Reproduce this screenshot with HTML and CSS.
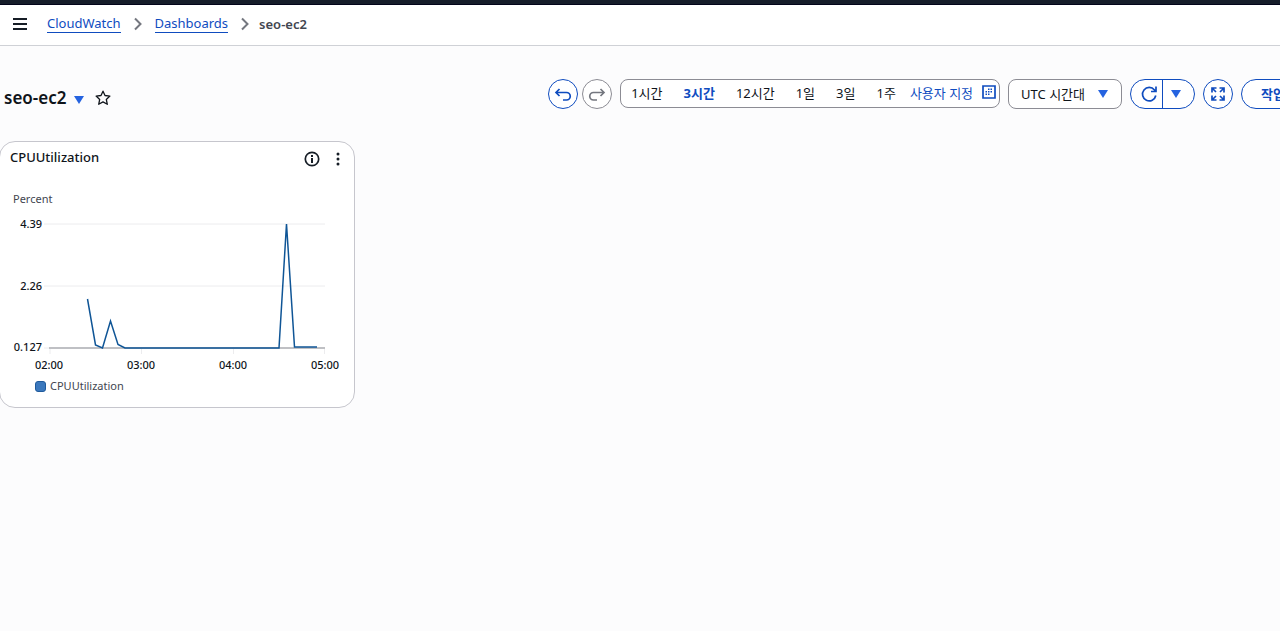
FILE: index.html
```html
<!DOCTYPE html>
<html lang="ko">
<head>
  <meta charset="UTF-8" />
  <meta name="viewport" content="width=device-width, initial-scale=1.0"/>
  <title>seo-ec2 | CloudWatch</title>
  <link rel="stylesheet" href="styles.css">
</head>
<body>

<div class="topbar"></div>

<!-- Breadcrumbs -->
<nav class="breadcrumbs" aria-label="Breadcrumbs">
  <button class="icon-btn menu" aria-label="Menu">
    <svg width="14" height="12" viewBox="0 0 14 12" stroke="#161d26" stroke-width="2"><path d="M0 1h14M0 6h14M0 11h14"/></svg>
  </button>
  <a href="#">CloudWatch</a>
  <svg class="sep" width="8" height="14" viewBox="0 0 8 14"><path d="M1 1.500l5.500 5.500L1 12.500"/></svg>
  <a href="#">Dashboards</a>
  <svg class="sep" width="8" height="14" viewBox="0 0 8 14"><path d="M1 1.500l5.500 5.500L1 12.500"/></svg>
  <span class="current">seo-ec2</span>
</nav>

<!-- Dashboard header -->
<header class="toolbar">
  <div class="title">
    <h1>seo-ec2</h1>
    <button class="icon-btn dashboards" aria-label="Dashboards">
      <svg class="caret" width="10" height="8" viewBox="0 0 10 8"><path d="M0 0h10L5 8z"/></svg>
    </button>
    <button class="icon-btn star" aria-label="Favorite">
      <svg width="16" height="16" viewBox="0 0 16 16" fill="none" stroke="#0f141a" stroke-width="1.3" stroke-linejoin="round"><path d="M8 1.200l2 4.300 4.900.6-3.600 3.300 1 4.900L8 11.900l-4.300 2.400 1-4.900L1.100 6.100 6 5.500z"/></svg>
    </button>
  </div>

  <div class="actions">
    <button class="round" aria-label="Undo">
      <svg width="18" height="18" viewBox="0 0 18 18"><path d="M5.500 4L2 7.500 5.500 11M2 7.500h10.500a3.700 3.700 0 0 1 0 7.500H9"/></svg>
    </button>
    <button class="round disabled" aria-label="Redo">
      <svg width="18" height="18" viewBox="0 0 18 18"><path d="M12.500 4L16 7.500 12.500 11M16 7.500H5.500a3.700 3.700 0 0 0 0 7.500H9"/></svg>
    </button>

    <div class="range">
      <button>1시간</button>
      <button class="selected">3시간</button>
      <button>12시간</button>
      <button>1일</button>
      <button>3일</button>
      <button>1주</button>
      <button class="custom">사용자 지정
        <svg width="14" height="14" viewBox="0 0 14 14"><path fill="none" stroke="#0f4cbf" stroke-width="1.700" d="M1 1h12v12H1z"/><path fill="#0f4cbf" d="M6 3.500h1.500V5H6zM8.500 3.500H10V5H8.500zM3.500 6H5v1.500H3.500zM6 6h1.500v1.500H6zM8.500 6H10v1.500H8.500zM3.500 8.500H5V10H3.500zM6 8.500h1.500V10H6z"/></svg>
      </button>
    </div>

    <div class="timezone">
      <select aria-label="시간대">
        <option>UTC 시간대</option>
      </select>
      <svg class="caret" width="10" height="8" viewBox="0 0 10 8"><path d="M0 0h10L5 8z"/></svg>
    </div>

    <div class="split">
      <button aria-label="Refresh">
        <svg width="18" height="18" viewBox="0 0 18 18"><path d="M15.800 10.500a6.700 6.700 0 1 1-1.300-5.500L16 6.500M16 1.500v5h-5"/></svg>
      </button>
      <button aria-label="Refresh options">
        <svg class="caret" width="10" height="8" viewBox="0 0 10 8"><path d="M0 0h10L5 8z"/></svg>
      </button>
    </div>

    <button class="round" aria-label="Full screen">
      <svg width="16" height="16" viewBox="0 0 16 16"><path d="M6.500 2H2v4.500M2 2l4 4M9.500 2H14v4.500M14 2l-4 4M6.500 14H2V9.500M2 14l4-4M9.500 14H14V9.500M14 14l-4-4"/></svg>
    </button>

    <button class="pill">작업
      <svg class="caret" width="10" height="8" viewBox="0 0 10 8"><path d="M0 0h10L5 8z"/></svg>
    </button>
  </div>
</header>

<main>
  <section class="widget">
    <div class="widget-head">
      <h2>CPUUtilization</h2>
      <button class="icon-btn" aria-label="Info">
        <svg width="16" height="16" viewBox="0 0 16 16"><circle cx="8" cy="8" r="6.700" fill="none" stroke="#161d26" stroke-width="1.700"/><path d="M7 4h2v2H7zM7 7h2v5H7z" fill="#161d26"/></svg>
      </button>
      <button class="icon-btn" aria-label="Widget actions">
        <svg width="4" height="14" viewBox="0 0 4 14" fill="#161d26"><circle cx="2" cy="2" r="1.500"/><circle cx="2" cy="7" r="1.500"/><circle cx="2" cy="12" r="1.500"/></svg>
      </button>
    </div>

    <svg class="chart" viewBox="0 0 354 186" role="img" aria-label="CPUUtilization">
      <text class="unit" x="13" y="17">Percent</text>

      <!-- grid -->
      <path class="grid" d="M44 38H325M44 100H325M44 162H49M50 162V168M141.500 162V168M233.500 162V168M324.500 162V168"/>
      <path class="axis" d="M49 162H325"/>

      <text class="tick y" x="42" y="42">4.39</text>
      <text class="tick y" x="42" y="104">2.26</text>
      <text class="tick y" x="42" y="165">0.127</text>

      <polyline class="line" points="87.500,113 95.500,159 102.500,162 110.500,135 118,158.500 125,162 279,162 286.500,38 294.500,161 317,161"/>

      <text class="tick x" x="49" y="183">02:00</text>
      <text class="tick x" x="141" y="183">03:00</text>
      <text class="tick x" x="233" y="183">04:00</text>
      <text class="tick x" x="325" y="183">05:00</text>
    </svg>

    <div class="legend"><span class="swatch"></span>CPUUtilization</div>
  </section>
</main>

</body>
</html>
```

FILE: styles.css
```css
* { margin: 0; padding: 0; box-sizing: border-box; }
body {
  font-family: "Noto Sans", "Noto Sans CJK KR", sans-serif;
  font-size: 13px;
  background: #fcfcfd;
  color: #0f141a;
  overflow-x: hidden;
}
button, select {
  font: inherit;
  color: inherit;
  background: none;
  border: 0;
  cursor: pointer;
}
svg { display: block; flex: none; }
.caret { fill: #2563e0; }
.icon-btn { display: flex; align-items: center; }

.topbar {
  height: 5px;
  background: #161d2a;
  border-bottom: 1px solid #02041a;
}

/* breadcrumbs */
.breadcrumbs {
  display: flex;
  align-items: center;
  gap: 13px;
  height: 41px;
  padding: 0 13px 2px;
  background: #fff;
  border-bottom: 1px solid #cfd1d6;
}
.breadcrumbs .menu { margin-right: 7px; }
.breadcrumbs a {
  color: #0f4cbf;
  text-decoration: none;
  line-height: 17px;
  border-bottom: 1px solid #0f4cbf;
}
.breadcrumbs .current {
  color: #424650;
  font-weight: 600;
  margin-left: -3px;
}
.sep {
  fill: none;
  stroke: #74777f;
  stroke-width: 2;
}

/* dashboard header */
.toolbar {
  display: flex;
  align-items: center;
  justify-content: space-between;
  padding: 32px 0 32px 4px;
}
.title {
  display: flex;
  align-items: center;
  gap: 8px;
  padding-top: 9px;
}
.title h1 {
  font-size: 17px;
  font-weight: 600;
  line-height: 22px;
}
.title .dashboards { padding-top: 4px; }
.title .star { margin-left: 3px; }

/* the last button runs past the right edge */
.actions {
  display: flex;
  align-items: center;
  gap: 8px;
  margin-right: -43px;
}
.actions > * { flex: none; }
.round, .split, .pill {
  display: flex;
  align-items: center;
  justify-content: center;
  height: 30px;
  background: #fff;
  border: 1px solid #0f4cbf;
  border-radius: 15px;
  color: #0f4cbf;
}
.round { width: 30px; }
.round svg, .split svg:not(.caret) {
  fill: none;
  stroke: #0f4cbf;
  stroke-width: 1.7;
}
.round + .round.disabled { margin-left: -4px; }
.round.disabled { border-color: #8c8c94; }
.round.disabled svg { stroke: #74777f; }

.range {
  display: flex;
  align-items: center;
  align-self: flex-start;
  gap: 1px;
  height: 29px;
  padding: 0 3px 2px 0;
  background: #fff;
  border: 1px solid #8c8c94;
  border-radius: 8px;
}
.range button { padding: 0 10px; }
.range .selected {
  color: #0f4cbf;
  font-weight: 700;
}
.range .custom {
  display: flex;
  align-items: center;
  gap: 9px;
  padding: 0 0 0 3px;
  color: #0f4cbf;
}

.timezone {
  position: relative;
  display: flex;
}
.timezone select {
  appearance: none;
  height: 30px;
  padding: 0 36px 0 12px;
  background: #fff;
  border: 1px solid #8c8c94;
  border-radius: 8px;
}
.timezone .caret {
  position: absolute;
  right: 14px;
  top: 11px;
  pointer-events: none;
}

.split button {
  display: flex;
  align-items: center;
  justify-content: center;
  width: 31px;
  height: 28px;
  padding-left: 4px;
}
.split button + button {
  width: 32px;
  padding: 0 5px 0 0;
  border-left: 1px solid #0f4cbf;
}
.pill {
  gap: 8px;
  padding: 0 19px;
  font-weight: 700;
}

/* widget */
.widget {
  width: 356px;
  margin-left: -1px;
  background: #fff;
  border: 1px solid #c6c6cd;
  border-radius: 16px;
}
.widget-head {
  display: flex;
  align-items: center;
  gap: 16px;
  padding: 5px 14px 0 10px;
}
.widget-head h2 {
  flex: 1;
  font-size: 13px;
  font-weight: 500;
  line-height: 18px;
}
.widget-head .icon-btn { padding-top: 4px; }
.chart {
  width: 100%;
  margin-top: 19px;
}
.chart text { font-size: 11px; }
.unit { fill: #424650; }
.tick { fill: #0f141a; font-weight: 500; }
.tick.y { text-anchor: end; }
.tick.x { text-anchor: middle; }
.grid {
  fill: none;
  stroke: #ececee;
}
.axis {
  fill: none;
  stroke: #bfc0c4;
  stroke-width: 2;
}
.line {
  fill: none;
  stroke: #0f5596;
  stroke-width: 1.5;
}
.legend {
  display: flex;
  align-items: center;
  gap: 4px;
  padding: 6px 0 13px 35px;
  font-size: 11px;
  line-height: 16px;
  color: #424650;
}
.swatch {
  width: 11px;
  height: 11px;
  background: #3b78bd;
  border: 1px solid #1f5a9c;
  border-radius: 3px;
}
```
